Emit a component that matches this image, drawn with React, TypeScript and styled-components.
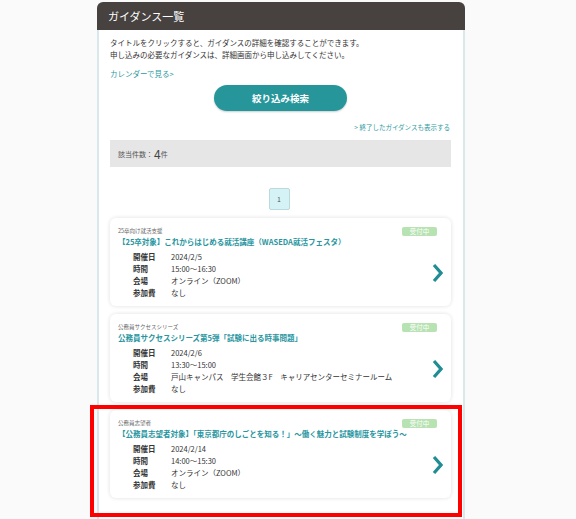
import React from "react";
import styled, { createGlobalStyle } from "styled-components";

const Global = createGlobalStyle`
  html, body { margin: 0; padding: 0; }
  body {
    background: #fafafa;
    font-family: "Noto Sans CJK JP", "Noto Sans", sans-serif;
    color: #333;
  }
`;

const Page = styled.div`
  position: relative;
  width: 576px;
  height: 519px;
  overflow: hidden;
  padding-top: 2px;
  box-sizing: border-box;
`;

const Panel = styled.section`
  margin-left: 97px;
  width: 368px;
  min-height: 560px;
  background: #fff;
  border-radius: 6px 6px 0 0;
  box-sizing: border-box;
`;

const Header = styled.h1`
  margin: 0;
  height: 28px;
  background: #47423f;
  border-radius: 6px 6px 0 0;
  color: #fff;
  font-size: 11px;
  font-weight: 400;
  line-height: 28px;
  padding-left: 11px;
`;

const Body = styled.div`
  border-left: 2px solid #d9e8eb;
  border-right: 2px solid #d9e8eb;
  padding: 7px 12px 40px 11px;
  min-height: 520px;
  box-sizing: border-box;
`;

const Intro = styled.p`
  margin: 0;
  font-size: 7.5px;
  line-height: 12px;
  color: #333;
`;

const Link = styled.a<{ $align?: string; $size?: number }>`
  display: block;
  color: #2c9aa0;
  text-decoration: none;
  font-size: ${(p) => p.$size ?? 7.5}px;
  line-height: 12px;
  text-align: ${(p) => p.$align ?? "left"};
`;

const CalendarLink = styled(Link)`
  margin-top: 7px;
`;

const EndedLink = styled(Link)`
  margin-top: 10px;
  padding-right: 1px;
`;

const ButtonRow = styled.div`
  display: flex;
  justify-content: center;
  margin-top: 5px;
`;

const SearchButton = styled.button`
  width: 133px;
  height: 26px;
  border: none;
  border-radius: 13px;
  background: #27969b;
  color: #fff;
  font-family: inherit;
  font-size: 9.5px;
  font-weight: 700;
  box-shadow: 0 1px 2px rgba(0, 0, 0, 0.2);
  cursor: pointer;
`;

const CountBar = styled.div`
  margin-top: 7px;
  height: 27px;
  background: #e6e6e6;
  display: flex;
  align-items: center;
  padding-left: 8px;
  font-size: 7px;
  color: #555;
`;

const CountNum = styled.span`
  font-size: 12px;
  color: #444;
  margin-left: 1px;
`;

const Pager = styled.div`
  display: flex;
  justify-content: center;
  margin-top: 21px;
  padding-right: 3px;
`;

const PageBox = styled.span`
  width: 21px;
  height: 22px;
  box-sizing: border-box;
  border: 1px solid #bcd9dc;
  border-radius: 2px;
  background: #d5f3f6;
  font-size: 7px;
  color: #555;
  display: flex;
  align-items: center;
  justify-content: center;
`;

const CardList = styled.div`
  display: flex;
  flex-direction: column;
  gap: 8px;
  margin-top: 8px;
`;

const Card = styled.article`
  height: 88px;
  box-sizing: border-box;
  background: #fff;
  border-radius: 6px;
  box-shadow: 0 0 4px rgba(0, 0, 0, 0.13);
  padding: 8px 14px 7px 8px;
`;

const CardTop = styled.div`
  display: flex;
  justify-content: space-between;
  align-items: center;
  height: 10px;
`;

const Category = styled.span`
  font-size: 5.5px;
  color: #666;
  line-height: 10px;
`;

const Badge = styled.span`
  width: 35px;
  height: 9px;
  border-radius: 2px;
  background: #b7e2b2;
  color: #fff;
  font-size: 6.5px;
  line-height: 9px;
  text-align: center;
  margin-top: 1px;
`;

const Title = styled.h2`
  margin: 0;
  font-size: 7.5px;
  font-weight: 700;
  line-height: 12px;
  color: #2895a0;
  white-space: nowrap;
`;

const CardBody = styled.div`
  display: flex;
  align-items: center;
  justify-content: space-between;
  margin-top: 3px;
  margin-right: -6px;
`;

const Details = styled.dl`
  margin: 0;
  padding-left: 15px;
  display: grid;
  grid-template-columns: 38px auto;
  grid-auto-rows: 12px;
  font-size: 7.5px;
  line-height: 12px;
`;

const Term = styled.dt`
  font-weight: 700;
  color: #333;
`;

const Desc = styled.dd`
  margin: 0;
  color: #333;
  white-space: nowrap;
`;

const Chevron = styled.svg`
  width: 11px;
  height: 20px;
  margin-top: -4px;
  flex: none;
`;

const Highlight = styled.div`
  position: absolute;
  left: 90px;
  top: 405px;
  width: 372px;
  height: 112px;
  box-sizing: border-box;
  border: 4px solid #ff0000;
  pointer-events: none;
`;

type Guide = {
  category: string;
  title: string;
  date: string;
  time: string;
  place: string;
  fee: string;
};

const guides: Guide[] = [
  {
    category: "25卒向け就活支援",
    title: "【25卒対象】これからはじめる就活講座（WASEDA就活フェスタ）",
    date: "2024/2/5",
    time: "15:00～16:30",
    place: "オンライン（ZOOM）",
    fee: "なし",
  },
  {
    category: "公務員サクセスシリーズ",
    title: "公務員サクセスシリーズ第5弾「試験に出る時事問題」",
    date: "2024/2/6",
    time: "13:30～15:00",
    place: "戸山キャンパス　学生会館３F　キャリアセンターセミナールーム",
    fee: "なし",
  },
  {
    category: "公務員志望者",
    title: "【公務員志望者対象】「東京都庁のしごとを知る！」～働く魅力と試験制度を学ぼう～",
    date: "2024/2/14",
    time: "14:00～15:30",
    place: "オンライン（ZOOM）",
    fee: "なし",
  },
];

const GuideCard: React.FC<{ g: Guide }> = ({ g }) => (
  <Card>
    <CardTop>
      <Category>{g.category}</Category>
      <Badge>受付中</Badge>
    </CardTop>
    <Title>{g.title}</Title>
    <CardBody>
      <Details>
        <Term>開催日</Term>
        <Desc>{g.date}</Desc>
        <Term>時間</Term>
        <Desc>{g.time}</Desc>
        <Term>会場</Term>
        <Desc>{g.place}</Desc>
        <Term>参加費</Term>
        <Desc>{g.fee}</Desc>
      </Details>
      <Chevron viewBox="0 0 11 20">
        <polyline
          points="2,2 9,10 2,18"
          fill="none"
          stroke="#1f8d92"
          strokeWidth="3.2"
          strokeLinejoin="miter"
        />
      </Chevron>
    </CardBody>
  </Card>
);

export default function App() {
  return (
    <>
      <Global />
      <Page>
        <Panel>
          <Header>ガイダンス一覧</Header>
          <Body>
            <Intro>
              タイトルをクリックすると、ガイダンスの詳細を確認することができます。
              <br />
              申し込みの必要なガイダンスは、詳細画面から申し込みしてください。
            </Intro>
            <CalendarLink href="#">カレンダーで見る&gt;</CalendarLink>
            <ButtonRow>
              <SearchButton>絞り込み検索</SearchButton>
            </ButtonRow>
            <EndedLink href="#" $align="right" $size={6.5}>
              &gt; 終了したガイダンスも表示する
            </EndedLink>
            <CountBar>
              該当件数：<CountNum>4</CountNum>件
            </CountBar>
            <Pager>
              <PageBox>1</PageBox>
            </Pager>
            <CardList>
              {guides.map((g) => (
                <GuideCard key={g.title} g={g} />
              ))}
            </CardList>
          </Body>
        </Panel>
        <Highlight />
      </Page>
    </>
  );
}
